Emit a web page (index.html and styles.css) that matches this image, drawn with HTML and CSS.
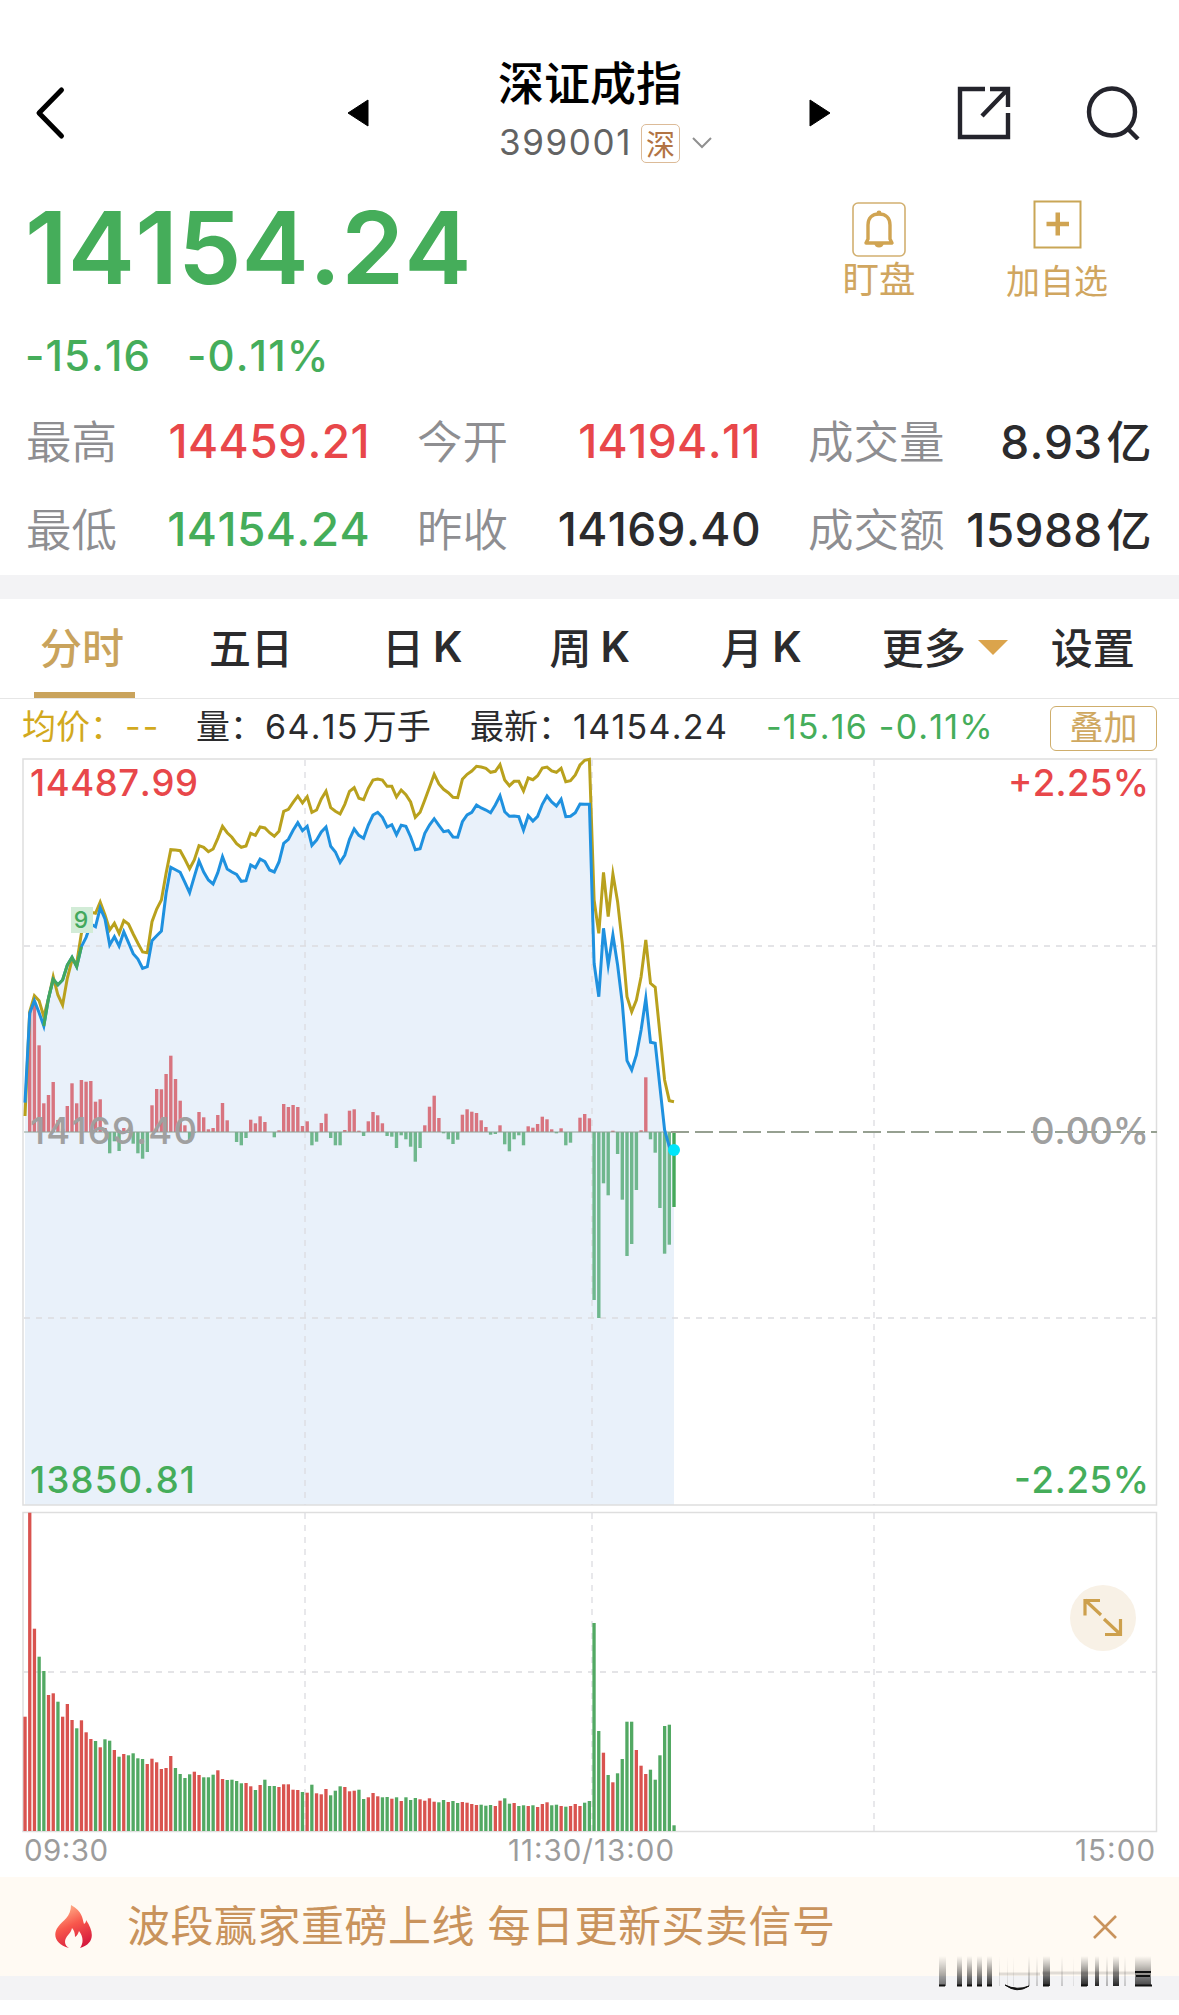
FILE: index.html
```html
<!DOCTYPE html>
<html lang="zh-CN">
<head>
  <meta charset="UTF-8" />
  <meta name="viewport" content="width=device-width, initial-scale=1" />
  <title>深证成指 399001</title>
  <link rel="stylesheet" href="styles.css">
</head>
<body>
  <header class="topbar">
    <svg class="back" width="36" height="56" viewBox="0 0 36 56"><path d="M29.500 5 L7 28 L29.500 51" fill="none" stroke="#000" stroke-width="5" stroke-linecap="round" stroke-linejoin="round"/></svg>
    <svg class="prev" width="22" height="28" viewBox="0 0 22 28"><path d="M21 1 V27 L1 14 Z" stroke="#000" stroke-linejoin="round"/></svg>
    <div class="title-box">
      <h1>深证成指</h1>
      <div class="code">
        <span>399001</span>
        <span class="market">深</span>
        <svg width="20" height="12" viewBox="0 0 20 12"><path d="M1 1 L10 10 L19 1" fill="none" stroke="#909090" stroke-width="2"/></svg>
      </div>
    </div>
    <svg class="next" width="22" height="28" viewBox="0 0 22 28"><path d="M1 1 V27 L21 14 Z" stroke="#000" stroke-linejoin="round"/></svg>
    <svg class="share" width="56" height="56" viewBox="0 0 56 56"><g fill="none" stroke="#24242c" stroke-width="4.400"><path d="M29 5 H4 V53 H52 V29"/><path d="M34 5 H52 V23 M52 5 L26 32"/></g></svg>
    <svg class="search" width="56" height="56" viewBox="0 0 56 56"><g fill="none" stroke="#24242c" stroke-width="4.400"><ellipse cx="26" cy="28" rx="23" ry="23.500"/><path d="M42 45 L52 55"/></g></svg>
  </header>

  <section class="quote">
    <div class="price-box">
      <div class="price">14154.24</div>
      <div class="change"><span>-15.16</span><span>-0.11%</span></div>
    </div>
    <div class="action watch">
      <svg width="54" height="56" viewBox="0 0 54 56"><rect x="1" y="1" width="52" height="53" rx="5" fill="none" stroke="#d2b070" stroke-width="1.600"/><path d="M16 37 V23 C16 16 20 12 27 12 C34 12 38 16 38 23 V37 L40 41 H14 Z" fill="none" stroke="#d0a452" stroke-width="3.400" stroke-linejoin="round"/><circle cx="27" cy="11" r="2.400" fill="#d0a452"/><path d="M22 41 H32 Q31 45.500 27 45.500 Q23 45.500 22 41" fill="#d0a452"/></svg>
      <span>盯盘</span>
    </div>
    <div class="action add">
      <svg width="50" height="50" viewBox="0 0 50 50"><rect x="2.500" y="1.500" width="46" height="46" fill="none" stroke="#c9a656" stroke-width="2"/><path d="M14.500 24 H37 M25.750 12.500 V35.500" stroke="#d0a452" stroke-width="4.500"/></svg>
      <span>加自选</span>
    </div>
  </section>

  <section class="stats">
    <div class="stat"><label>最高</label><b class="up">14459.21</b></div>
    <div class="stat"><label>今开</label><b class="up">14194.11</b></div>
    <div class="stat"><label>成交量</label><b>8.93<i>亿</i></b></div>
    <div class="stat"><label>最低</label><b class="down">14154.24</b></div>
    <div class="stat"><label>昨收</label><b>14169.40</b></div>
    <div class="stat"><label>成交额</label><b>15988<i>亿</i></b></div>
  </section>

  <div class="divider"></div>

  <nav class="tabs">
    <a class="tab active">分时</a>
    <a class="tab">五日</a>
    <a class="tab">日<em>K</em></a>
    <a class="tab">周<em>K</em></a>
    <a class="tab">月<em>K</em></a>
    <a class="tab more">更多<span class="caret"></span></a>
    <a class="tab">设置</a>
  </nav>

  <div class="info">
    <span class="avg">均价：<em>--</em></span>
    <span class="vol">量：<em>64.15</em>万手</span>
    <span class="last">最新：<em>14154.24</em></span>
    <span class="diff down">-15.16 -0.11%</span>
    <button class="overlay">叠加</button>
  </div>

  <svg class="chart" id="chart" width="1179" height="1119" viewBox="0 756 1179 1119"></svg>

  <section class="banner">
    <svg width="42" height="46" viewBox="0 0 42 46">
      <defs>
        <linearGradient id="fire" x1="0.300" y1="0" x2="0.700" y2="1">
          <stop offset="0" stop-color="#ffb48c"/>
          <stop offset="0.450" stop-color="#f8584c"/>
          <stop offset="1" stop-color="#d4163c"/>
        </linearGradient>
      </defs>
      <path d="M18 1 C30 8 29 14 31 20 C33 19 33 17 33 16 C42 29 41 40 27 44 C31 39 30 32 26 27 C25 30 24 32 22 33 C22 29 21 26 19 24 C18 30 12 32 12 38 C12 41 14 43 16 44 C3 41 -1 31 5 23 C10 16 18 13 18 1 Z" fill="url(#fire)"/>
    </svg>
    <p>波段赢家重磅上线 每日更新买卖信号</p>
    <svg class="close" width="26" height="26" viewBox="0 0 26 26"><path d="M2 2 L24 24 M24 2 L2 24" stroke="#c9935c" stroke-width="2.600"/></svg>
  </section>
  <div class="divider bottom">
    <svg class="smear" id="smear" width="216" height="38" viewBox="0 0 216 38"></svg>
  </div>

  <script src="script.js"></script>
</body>
</html>
```

FILE: styles.css
```css
* {
  box-sizing: border-box;
}
body {
  margin: 0;
  background: #fff;
  color: #2b2b2d;
  font-family: Inter, "Noto Sans CJK SC", sans-serif;
  font-kerning: none;
}
svg {
  display: block;
  flex: none;
}
em,
i {
  font-style: normal;
}
.up {
  color: #e8474a;
}
.down {
  color: #45ad5a;
}

.topbar {
  display: flex;
  height: 180px;
  padding-left: 32px;
  color: #000;
}
.back {
  margin-top: 85px;
}
.prev {
  margin: 99px 0 0 279px;
}
.title-box {
  width: 214px;
  margin: 55px 0 0 129px;
}
h1 {
  margin: 0;
  font-size: 46px;
  line-height: 56px;
  font-weight: 500;
  white-space: nowrap;
}
.code {
  display: flex;
  align-items: center;
  height: 40px;
  margin-top: 12px;
  padding-left: 1px;
  font-size: 35px;
  color: #636363;
}
.code span:first-child {
  line-height: 38px;
  padding-bottom: 2px;
  letter-spacing: 1.6px;
}
.market {
  display: flex;
  align-items: center;
  justify-content: center;
  width: 39px;
  height: 39px;
  margin: 0 12px 0 auto;
  border: 1.5px solid #dcbb98;
  border-radius: 5px;
  font-size: 29px;
  color: #b27444;
}
.next {
  margin: 99px 0 0 97px;
}
.share {
  margin: 84px 0 0 125px;
}
.search {
  margin: 84px 0 0 74px;
}

.quote {
  display: flex;
  height: 218px;
}
.price-box {
  width: 840px;
  padding-left: 25px;
}
.price {
  height: 130px;
  font-size: 101px;
  line-height: 134px;
  font-weight: 600;
  color: #45ad5a;
  letter-spacing: 0.1px;
}
.change {
  display: flex;
  gap: 36px;
  font-size: 42px;
  line-height: 92px;
  font-weight: 500;
  color: #45ad5a;
  letter-spacing: 1.1px;
}
.action {
  display: flex;
  flex-direction: column;
  align-items: center;
  padding-top: 22px;
  color: #d0a660;
  white-space: nowrap;
}
.action span {
  font-size: 36.5px;
  line-height: 44px;
}
.watch {
  width: 78px;
}
.add {
  width: 110px;
  margin-left: 84px;
  padding-top: 20px;
}
.add span {
  margin-top: 10px;
  font-size: 34px;
}

.stats {
  display: grid;
  grid-template-columns: 344px 344px 344px;
  column-gap: 47px;
  height: 177px;
  padding-left: 26px;
  grid-auto-rows: 88px;
}
.stat {
  display: flex;
  justify-content: space-between;
  align-items: center;
  white-space: nowrap;
}
.stat label {
  margin-top: -7px;
  font-size: 45.5px;
  color: #8e8e91;
  font-weight: 350;
}
.stat b {
  margin-top: -2px;
  font-size: 46px;
  font-weight: 500;
  letter-spacing: 0.4px;
}
.stat:nth-child(3n) b {
  margin-top: -6px;
}
.stat i {
  margin-left: 4px;
  font-size: 45px;
}

.divider {
  height: 24px;
  background: #f3f3f5;
}

.tabs {
  display: flex;
  height: 100px;
  border-bottom: 1px solid #e6e6e6;
  padding-left: 34px;
}
.tab {
  display: flex;
  flex: none;
  align-items: center;
  padding-bottom: 7px;
  font-size: 42px;
  font-weight: 500;
  white-space: nowrap;
  margin-right: 74px;
}
.tab em {
  margin: 3px 0 0 9px;
  font-weight: 600;
}
.tab.active {
  width: 101px;
  padding-left: 6px;
  padding-bottom: 1px;
  color: #c9a35c;
  border-bottom: 6px solid #c9a35c;
}
.tab:nth-child(2) {
  margin-right: 89px;
}
.tab:nth-child(3) {
  margin-right: 87px;
}
.tab:nth-child(4) {
  margin-right: 91px;
}
.tab:nth-child(5) {
  margin-right: 80px;
}
.tab.more {
  margin-right: 43px;
}
.caret {
  margin: 5px 0 0 12px;
  border: 15px solid transparent;
  border-top-color: #dba44c;
  border-bottom: 0;
}

.info {
  display: flex;
  height: 57px;
  padding-top: 2px;
  font-size: 34px;
  line-height: 51px;
  white-space: nowrap;
}
.info span {
  flex: none;
}
.avg {
  width: 174px;
  margin-left: 22px;
  color: #d2a91e;
}
.vol {
  width: 274px;
}
.info em {
  margin-left: 1px;
  font-size: 34px;
  letter-spacing: 1.3px;
}
.info .avg em {
  letter-spacing: 2px;
}
.info .vol em {
  margin-right: 4px;
}
.last {
  width: 296px;
}
.diff {
  width: 284px;
  font-size: 34px;
  letter-spacing: 1.2px;
}
.overlay {
  width: 107px;
  height: 45px;
  margin-top: 5px;
  padding: 0 0 5px;
  border: 1.5px solid #cfae6c;
  border-radius: 6px;
  background: #fff;
  color: #cfa860;
  font: 34px/38px "Noto Sans CJK SC", sans-serif;
}

.chart text {
  font-family: Inter, sans-serif;
}
.scale {
  font-size: 36.5px;
  font-weight: 500;
}
.time {
  font-size: 29.5px;
}

.banner {
  display: flex;
  align-items: center;
  height: 99px;
  margin-top: 2px;
  padding: 0 61px 0 53px;
  background: #fffaf3;
}
.banner p {
  margin: -7px 0 0 32px;
  font-size: 43px;
  color: #c9935c;
  letter-spacing: 0.5px;
}
.close {
  margin-left: auto;
}
.bottom {
  position: relative;
}
.smear {
  position: absolute;
  left: 937px;
  top: -22px;
}
```

FILE: script.js
```js
const STEP = 4.703;
const LEFT = 25;
const ZERO = 1132;

// line values: offset below y=750, in thirds of a pixel
const price = [1058,790,752,788,828,745,688,704,690,645,622,650,590,562,522,530,474,507,585,560,588,545,578,611,627,655,650,572,557,543,430,352,359,367,397,428,380,333,366,390,402,368,320,357,366,373,394,392,345,353,327,335,360,366,336,280,268,241,218,242,229,286,270,246,231,289,306,337,315,268,237,256,265,225,195,187,202,231,224,254,226,229,260,299,296,250,225,206,226,245,242,261,262,215,195,187,165,174,180,188,165,137,185,199,198,200,240,197,213,199,163,138,156,168,148,200,199,188,162,163,163,640,740,535,645,555,645,760,932,960,915,840,745,877,880,1010,1140,1190,1200];
const lead = [1098,785,737,752,800,745,680,735,765,685,630,640,550,490,487,490,456,495,540,520,550,512,522,552,580,606,608,515,477,450,370,299,300,302,328,356,330,287,292,305,297,265,229,248,262,281,292,288,250,256,231,234,248,259,244,184,178,157,138,159,140,187,180,147,124,173,184,192,163,124,113,145,149,115,90,87,90,109,109,141,120,134,156,202,187,150,112,73,102,118,128,142,143,88,73,63,49,51,55,67,64,44,90,107,94,94,123,84,89,77,54,51,63,67,55,95,92,75,45,31,28,450,550,367,500,372,455,580,740,785,750,680,570,700,712,850,990,1052,1055];
const force = [0,360,390,260,86,111,150,36,10,78,146,86,156,151,153,91,98,12,-64,-28,-57,12,-2,-35,-64,-80,-60,80,129,128,174,229,159,94,20,-30,-2,60,44,8,12,51,87,35,0,-30,-40,-18,37,26,47,30,0,-16,5,84,75,81,75,18,32,-40,-29,27,55,-18,-40,-40,6,64,68,4,-12,32,60,50,26,-12,-14,-48,-10,-22,-44,-89,-48,20,76,109,42,-4,-22,-36,-23,52,68,61,57,35,15,-8,-6,20,-37,-58,-22,-10,-40,17,13,24,46,38,8,-4,11,-40,-32,0,43,54,41,-504,-558,-154,-190,4,-66,-203,-372,-336,-174,5,164,-22,-62,-228,-365,-338,-225];
// volume: top edge below y=1490 in thirds, and bar colour
const volume = [680,68,416,500,543,615,610,635,680,642,690,715,691,727,747,753,772,748,752,780,800,792,796,790,805,807,822,806,817,837,834,798,834,852,864,853,845,855,862,862,854,841,867,870,869,873,880,879,889,900,885,869,888,888,891,883,883,899,900,906,908,884,910,913,897,916,902,889,891,904,902,899,927,922,909,919,922,921,926,922,933,922,930,924,928,932,925,935,937,930,936,933,939,936,938,942,945,944,947,945,948,932,925,941,939,948,946,948,946,951,942,937,946,944,948,950,948,942,948,938,933,399,723,788,855,877,850,807,695,695,780,827,852,839,869,796,708,704,1006];
const colors = 'rrrggrrgrrrgrrrgrggrgrggggrrrrrrggggrrgggrrggggrrgrgggrrrrrgrgrrrgggrrrggrrrggrgrgggrrrrggrggrrrrgggrrggrggrgrrrggrgrrrggggrgrggggrrrggggggg';

const x = i => LEFT + i * STEP;
const toPoints = list => list.map((v, i) => `${x(i).toFixed(1)},${(750 + v / 3).toFixed(1)}`);
const bar = (i, y, h, w, fill) => `<rect x="${(x(i) - w / 2).toFixed(1)}" y="${y.toFixed(1)}" width="${w}" height="${h.toFixed(1)}" fill="${fill}"/>`;
const line = (points, color) => `<polyline points="${points.join(' ')}" fill="none" stroke="${color}" stroke-width="3" stroke-miterlimit="8"/>`;
const label = (cls, px, py, text, fill, width, anchor = 'start') =>
  `<text class="${cls}" x="${px}" y="${py}" fill="${fill}" text-anchor="${anchor}" textLength="${width}">${text}</text>`;

const pricePts = toPoints(price);
let out = '';

// frames and grid
out += `<path d="M${x(0)},1505 L${pricePts.join(' L')} V1505 Z" fill="#e9f1fa"/>`;
out += '<g fill="none" stroke="#dedede" stroke-width="1.500"><rect x="23" y="759" width="1133.500" height="746"/><rect x="23" y="1512.500" width="1133.500" height="319"/></g>';
out += '<path d="M305 760 V1505 M592 760 V1505 M874 760 V1505 M305 1513 V1831 M592 1513 V1831 M874 1513 V1831 M24 946 H1156 M24 1318 H1156 M24 1672 H1156" fill="none" stroke="#dcdce0" stroke-width="1.300" stroke-dasharray="6 6"/>';

force.forEach((v, i) => {
  if (!v) return;
  const h = Math.abs(v) / 3;
  const last = i === force.length - 1;
  out += bar(i, v > 0 ? ZERO - h : ZERO, h, 3.4, v > 0 ? '#d8747f' : last ? '#45a85a' : '#6fb78d');
});
out += `<path d="M24 ${ZERO} H674" stroke="#8da295" stroke-width="1.200"/>`;
out += `<path d="M671 ${ZERO} H1157" stroke="#96a091" stroke-width="2" stroke-dasharray="18 6"/>`;

out += line(toPoints(lead), '#b9a11d');
out += line(pricePts, '#1f91df');
out += line(pricePts.slice(4, 13), '#43a85c');
out += '<circle cx="674" cy="1150" r="6" fill="#00e5fa"/>';

volume.forEach((v, i) => {
  out += bar(i, 1490 + v / 3, (1023 - v) / 3, 3.3, colors[i] === 'r' ? '#d9534f' : '#52a963');
});

out += '<rect x="71" y="907" width="22" height="26" fill="#d2ecd7"/>';
out += '<text x="81" y="928" font-size="23" font-weight="500" text-anchor="middle" fill="#43a85c">9</text>';
out += label('scale', 30, 796, '14487.99', '#e8474a', 168);
out += label('scale', 1149, 796, '+2.25%', '#e8474a', 141, 'end');
out += label('scale', 30, 1144, '14169.40', '#a0a0a0', 167);
out += label('scale', 1149, 1144, '0.00%', '#a0a0a0', 118, 'end');
out += label('scale', 30, 1493, '13850.81', '#45ad5a', 165);
out += label('scale', 1149, 1493, '-2.25%', '#45ad5a', 135, 'end');
out += label('time', 24, 1861, '09:30', '#9c9c9c', 84);
out += label('time', 674, 1861, '11:30/13:00', '#9c9c9c', 166, 'end');
out += label('time', 1155, 1861, '15:00', '#9c9c9c', 80, 'end');

// expand button
out += '<circle cx="1103" cy="1618" r="33" fill="#f8f1e6"/>';
out += '<path d="M1101 1615 L1085 1600 M1100 1600.500 H1085 V1615.500 M1104 1619 L1120 1634 M1105 1634.500 H1120.500 V1619" fill="none" stroke="#cda04d" stroke-width="3.200"/>';

document.getElementById('chart').innerHTML = out;

// faded stripes at the bottom right: x, width, opacity
const stripes = [[2,7,.6],[20,5,.85],[30,5,.85],[40,5,.85],[50,5,.9],[62,1,.15],[70,1,.12],[76,1,.12],[91,2,.3],[99,2,.2],[106,7,.95],[124,2,.2],[136,1,.1],[144,7,.95],[158,4,.95],[169,2,.3],[176,6,.95],[187,2,.2],[198,16,.8]];
let smear = '<defs><linearGradient id="fade" x1="0" y1="0" x2="0" y2="1"><stop offset="0" stop-opacity="0"/><stop offset=".3" stop-opacity=".25"/><stop offset="1" stop-opacity=".9"/></linearGradient></defs>';
smear += stripes.map(([sx, w, o]) => `<rect x="${sx}" y="2" width="${w}" height="30" fill="url(#fade)" opacity="${o}"/>`).join('');
smear += '<path d="M2 31.500 H8 M20 31.500 H25 M30 31.500 H35 M40 31.500 H45 M50 31.500 H55 M106 31.500 H112 M144 31.500 H150 M198 31.500 H215 M198 18 H214 M199 22 H213" stroke="#111" stroke-width="2"/>';
smear += '<path d="M105 19 H199 M62 20 H103" stroke="#000" stroke-opacity=".12" stroke-width="3"/>';
smear += '<path d="M68 31 Q80 40 92 32 Q80 37 68 31 Z" fill="#111" stroke="#111"/>';
document.getElementById('smear').innerHTML = smear;
```
